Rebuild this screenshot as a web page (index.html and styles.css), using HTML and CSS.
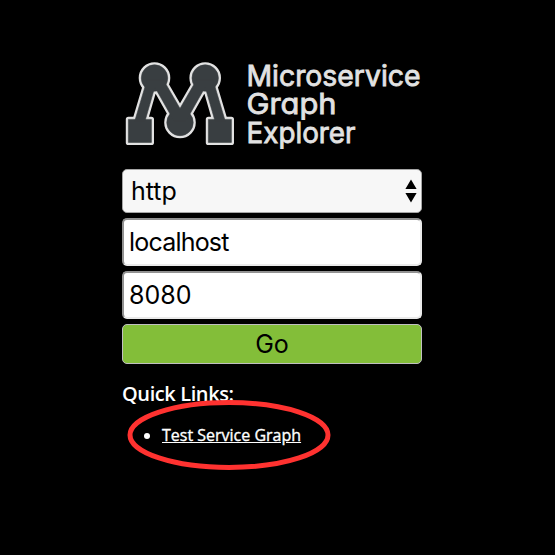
FILE: index.html
```html
<!DOCTYPE html>
<html lang="en">
<head>
<meta charset="utf-8">
<title>Microservice Graph Explorer</title>
<link rel="stylesheet" href="styles.css">
</head>
<body>
<main class="panel">
  <header class="brand">
    <svg class="mark" width="112" height="86" viewBox="124 61 112 86" aria-hidden="true">
      <defs>
        <g id="nodes">
          <circle cx="154.5" cy="78" r="13.2"/>
          <circle cx="205.2" cy="78" r="13.2"/>
          <circle cx="180" cy="122.5" r="13.2"/>
          <path d="M128.4 119.4h23v23h-23zM208.4 119.4h23v23h-23z"/>
          <path d="M147 80L134.8 121H145L154.8 87L174 121H186L205.2 87L215 121H225.2L213 80H196.5L180 108.5L163.5 80Z"/>
        </g>
      </defs>
      <use href="#nodes" class="outline"/>
      <use href="#nodes" class="core"/>
    </svg>
    <svg class="wordmark" width="178" height="90" viewBox="245 61 178 90">
      <text x="246.5" y="86" textLength="174" lengthAdjust="spacingAndGlyphs">Microservice</text>
      <text x="246.5" y="114.4" textLength="90" lengthAdjust="spacingAndGlyphs">Graph</text>
      <text x="246.5" y="143.4" textLength="109" lengthAdjust="spacingAndGlyphs">Explorer</text>
    </svg>
  </header>
  <form class="connect">
    <div class="field select"><span>http</span>
      <svg class="arrows" width="12" height="24" viewBox="0 0 12 24"><path d="M6 0.5L11.6 10H.4zM.4 14H11.6L6 23.5z"/></svg>
    </div>
    <div class="field input host">localhost</div>
    <div class="field input">8080</div>
    <button class="go" type="button">Go</button>
  </form>
  <h2 class="heading">Quick Links:</h2>
  <ul class="links">
    <li><a href="#">Test Service Graph</a></li>
  </ul>
  <svg class="ring" width="206" height="72" viewBox="0 0 206 72" aria-hidden="true"><ellipse cx="103" cy="36" rx="99" ry="32.5"/></svg>
</main>
</body>
</html>
```
FILE: styles.css
```css
* { box-sizing: border-box; }
body {
  margin: 0;
  min-height: 100vh;
  background: #000;
  color: #fff;
  font-family: "Open Sans", sans-serif;
}
.panel {
  position: relative;
  width: 300px;
  min-height: 100vh;
  margin-left: 122px;
  padding-top: 61px;
}
.brand {
  display: flex;
  gap: 9px;
  height: 108px;
  margin: 0 -1px 0 2px;
}
.mark, .wordmark { flex: none; }
.outline { fill: #e2e2e2; stroke: #e2e2e2; stroke-width: 5.2; stroke-linejoin: round; }
.core { fill: #393e41; stroke: #393e41; stroke-width: .6; }
.wordmark {
  overflow: visible;
  fill: #e2e2e2;
  stroke: #e2e2e2;
  stroke-width: .8;
  font: 400 28.5px Inter, sans-serif;
  font-feature-settings: "cv11";
}
.connect {
  display: flex;
  flex-direction: column;
  gap: 5px;
  font: 25px/1 Inter, sans-serif;
  color: #000;
}
.field {
  display: flex;
  align-items: center;
  border-radius: 5px;
}
.select {
  justify-content: space-between;
  height: 44px;
  padding: 0 4px 0 8px;
  background: #f7f7f7;
  border: 1px solid #a6a6a6;
}
.input {
  height: 48px;
  padding: 1px 0 0 5px;
  background: #fff;
  border: 2px solid;
  border-color: #929292 #eaeaea #eaeaea #929292;
}
.host { letter-spacing: -.8px; }
.go {
  height: 40px;
  padding: 0;
  border: 1px solid #c0c0c0;
  border-radius: 5px;
  background: #83be39;
  color: #000;
  font: inherit;
}
.heading {
  margin: 16px 0 0;
  font-size: 20px;
  font-weight: 600;
  line-height: 28px;
  letter-spacing: -.4px;
}
.links {
  margin: 16px 0 0;
  padding-left: 40px;
  font-size: 16px;
  line-height: 22px;
}
.links a {
  color: #fff;
  -webkit-text-stroke: .35px #fff;
}
.ring {
  position: absolute;
  left: 4px;
  top: 399px;
  fill: none;
  stroke: #ff3230;
  stroke-width: 5;
}
```
